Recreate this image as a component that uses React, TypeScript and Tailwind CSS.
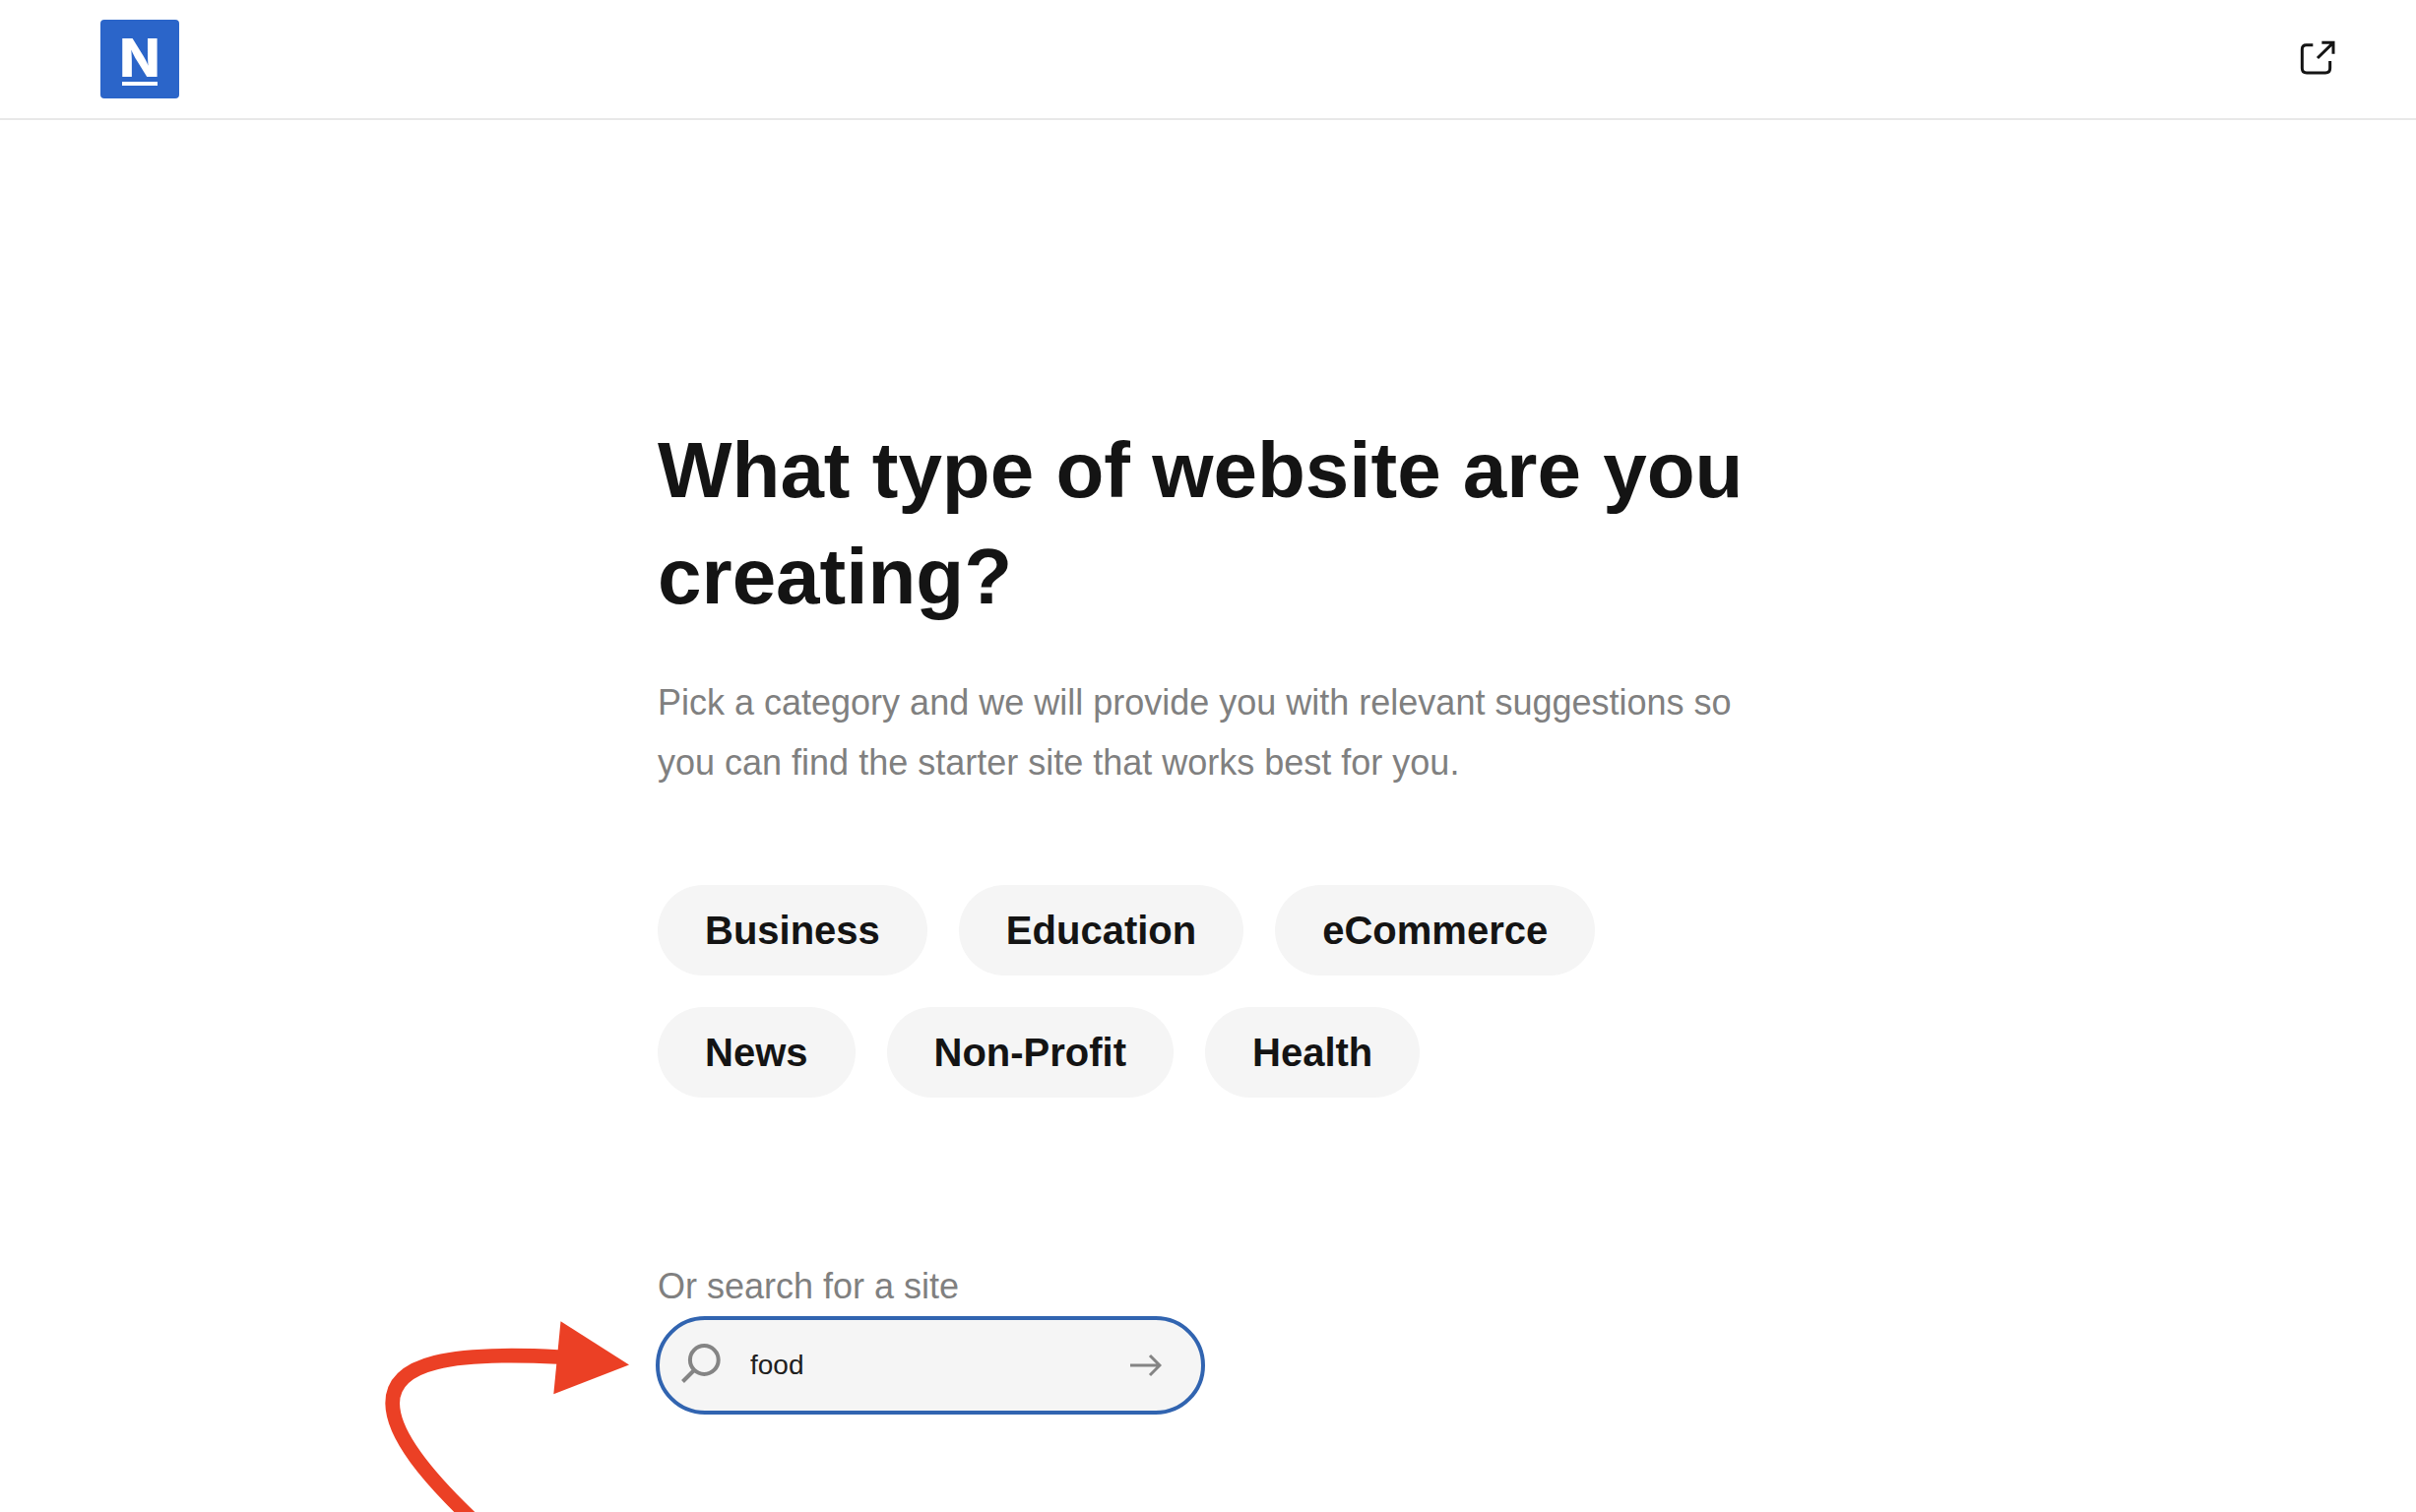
import { useState } from "react"
import type { FormEvent } from "react"

const categories = ["Business", "Education", "eCommerce", "News", "Non-Profit", "Health"]

const Logo = () => (
    <a href="#" aria-label="Home" className="flex h-20 w-20 flex-col items-center justify-center gap-1 rounded bg-[#2b65c9] pt-1.5">
        <span className="font-[Inter,sans-serif] text-[54px] leading-10 font-extrabold text-white">N</span>
        <span className="h-1 w-9 bg-white" />
    </a>
)

const ExternalIcon = () => (
    <svg width="40" height="40" viewBox="0 0 120 120" fill="none" stroke="currentColor" strokeWidth="9">
        <path d="M46 17H26Q13 17 13 30V88Q13 102 27 102H84Q98 102 98 88V66" />
        <path d="M60 57L107 11M73 10H108V44" />
    </svg>
)

const SearchIcon = () => (
    <svg width="40" height="44" viewBox="0 0 40 44" fill="none" stroke="currentColor" strokeWidth="4" className="shrink-0">
        <circle cx="23.300" cy="16.500" r="14.400" />
        <path d="M13.500 26.500L1.500 38.500" />
    </svg>
)

const ArrowIcon = () => (
    <svg width="32" height="24" viewBox="0 0 32 24" fill="none" stroke="currentColor" strokeWidth="3">
        <path d="M0 12H30M20 2L30 12L20 22" />
    </svg>
)

// Red pointer that leads the eye to the search box
const Pointer = () => (
    <svg
        width="300"
        height="216"
        viewBox="0 0 300 216"
        aria-hidden="true"
        className="pointer-events-none absolute right-full -top-5"
    >
        <path d="M110 223C66 181 29 138 28.700 105C28 62 90 52 197 57.500" fill="none" stroke="#eb4025" strokeWidth="14.700" />
        <path d="M199.500 21.300L269 65.500L192.300 95.300Z" fill="#eb4025" />
    </svg>
)

const App = () => {
    const [query, setQuery] = useState("food")
    const [selected, setSelected] = useState("")

    const handleSubmit = (e: FormEvent) => {
        e.preventDefault()
    }

    return (
        <div className="min-h-screen overflow-hidden bg-white font-['Liberation_Sans',Arial,sans-serif] text-[#141414]">
            <header className="flex h-[122px] items-center justify-between border-b-2 border-[#e8e8e8] pr-20 pl-[102px]">
                <Logo />
                <a href="#" aria-label="Exit to dashboard">
                    <ExternalIcon />
                </a>
            </header>
            <main className="mx-auto max-w-[1118px] pt-[302px]">
                <h1 className="text-[80px] leading-[108px] font-bold">What type of website are you creating?</h1>
                <p className="mt-[43px] text-4xl leading-[61px] text-[#808080]">
                    Pick a category and we will provide you with relevant suggestions so you can find the starter site that works best for you.
                </p>
                <div className="mt-[94px] flex max-w-[1000px] flex-wrap gap-8">
                    {categories.map((category) => (
                        <button
                            key={category}
                            type="button"
                            aria-pressed={selected === category}
                            onClick={() => setSelected(category)}
                            className="h-[92px] cursor-pointer rounded-full bg-[#f5f5f5] px-12 text-[40px] font-bold"
                        >
                            {category}
                        </button>
                    ))}
                </div>
                <form className="mt-[161px]" onSubmit={handleSubmit}>
                    <label htmlFor="site-search" className="block text-4xl leading-[61px] text-[#808080]">
                        Or search for a site
                    </label>
                    <div className="relative -mx-0.5 flex h-[100px] w-[558px] max-w-full items-center rounded-full border-4 border-[#3164b0] bg-[#f5f5f5] pr-10 pl-[22px] text-[#848484]">
                        <Pointer />
                        <SearchIcon />
                        <input
                            id="site-search"
                            type="text"
                            value={query}
                            onChange={(e) => setQuery(e.target.value)}
                            className="ml-[30px] h-full min-w-0 flex-1 bg-transparent text-[28px] text-[#202020] outline-none"
                        />
                        <button type="submit" aria-label="Search" className="cursor-pointer">
                            <ArrowIcon />
                        </button>
                    </div>
                </form>
            </main>
        </div>
    )
}

export default App
